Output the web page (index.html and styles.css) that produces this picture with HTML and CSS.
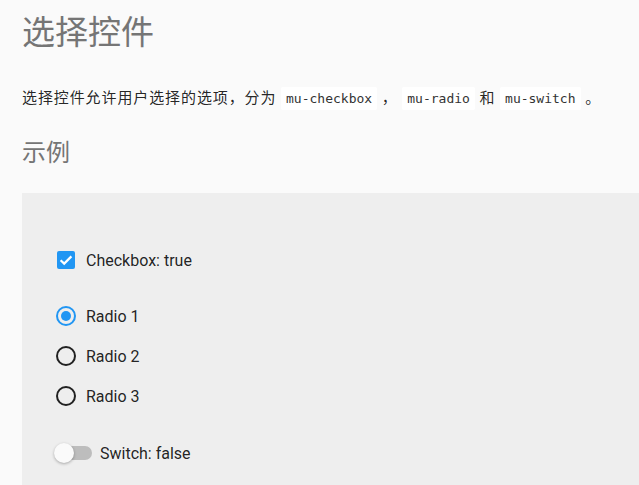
FILE: index.html
```html
<!DOCTYPE html>
<html lang="zh-CN">

<head>
    <meta charset="UTF-8">
    <meta name="viewport" content="width=device-width, initial-scale=1.0">
    <title>选择控件</title>
    <link rel="stylesheet" href="styles.css">
</head>

<body>
    <div class="page">
        <h1 class="title">选择控件</h1>

        <p class="desc">选择控件允许用户选择的选项，分为 <code>mu-checkbox</code> ， <code>mu-radio</code> 和 <code>mu-switch</code> 。</p>

        <h2 class="subtitle">示例</h2>

        <div class="demo">
            <label class="row row-checkbox">
                <span class="checkbox">
                    <svg viewBox="0 0 18 18" width="18" height="18">
                        <path d="M3.6 9.2 L7.2 12.6 L14.4 5.4" fill="none" stroke="#fff" stroke-width="2.2" />
                    </svg>
                </span>
                <span class="label">Checkbox: true</span>
            </label>

            <div class="radios">
                <label class="row">
                    <span class="radio checked"></span>
                    <span class="label">Radio 1</span>
                </label>
                <label class="row">
                    <span class="radio"></span>
                    <span class="label">Radio 2</span>
                </label>
                <label class="row">
                    <span class="radio"></span>
                    <span class="label">Radio 3</span>
                </label>
            </div>

            <label class="row row-switch">
                <span class="switch">
                    <span class="track"></span>
                    <span class="thumb"></span>
                </span>
                <span class="label">Switch: false</span>
            </label>
        </div>
    </div>
</body>

</html>
```

FILE: styles.css
```css
body {
    margin: 0;
    height: 100vh;
    background-color: #fafafa;
    font-family: Roboto, "Noto Sans CJK SC", sans-serif;
    color: rgba(0, 0, 0, .87);
    overflow: hidden;
}

.page {
    padding-left: 22px;
}

.title {
    margin: 0;
    padding-top: 12px;
    font-size: 33px;
    font-weight: 400;
    line-height: 42px;
    color: #757575;
}

.desc {
    margin: 32px 0 0;
    font-size: 15px;
    line-height: 24px;
    letter-spacing: 0.9px;
}

code {
    font-family: "DejaVu Sans Mono", monospace;
    font-size: 13px;
    letter-spacing: 0;
    background-color: #fff;
    padding: 4px 5px;
    border-radius: 2px;
    color: #333;
}

.subtitle {
    margin: 24px 0 0;
    font-size: 24px;
    font-weight: 400;
    line-height: 36px;
    color: #757575;
}

.demo {
    margin-top: 22px;
    background-color: #eee;
    padding: 45px 0 0 34px;
    height: 260px;
}

.row {
    display: flex;
    align-items: center;
    height: 40px;
    font-size: 16px;
}

.row-checkbox {
    height: 44px;
}

.checkbox {
    width: 18px;
    height: 18px;
    margin-left: 1px;
    margin-right: 11px;
    background-color: #2196f3;
    border-radius: 2px;
    display: flex;
}

.radios {
    margin-top: 14px;
}

.radio {
    width: 20px;
    height: 20px;
    box-sizing: border-box;
    border: 2px solid #212121;
    border-radius: 50%;
    margin-right: 10px;
    display: flex;
    align-items: center;
    justify-content: center;
}

.radio.checked {
    border-color: #2196f3;
}

.radio.checked::after {
    content: "";
    width: 10px;
    height: 10px;
    border-radius: 50%;
    background-color: #2196f3;
}

.row-switch {
    margin-top: 17px;
}

.switch {
    position: relative;
    width: 38px;
    height: 20px;
    margin-left: -2px;
    margin-right: 8px;
}

.track {
    position: absolute;
    left: 4px;
    top: 3px;
    width: 34px;
    height: 14px;
    border-radius: 7px;
    background-color: #bdbdbd;
}

.thumb {
    position: absolute;
    left: 0;
    top: 0;
    width: 20px;
    height: 20px;
    border-radius: 50%;
    background-color: #fafafa;
    box-shadow: 0 1px 3px rgba(0, 0, 0, .3);
}
```
